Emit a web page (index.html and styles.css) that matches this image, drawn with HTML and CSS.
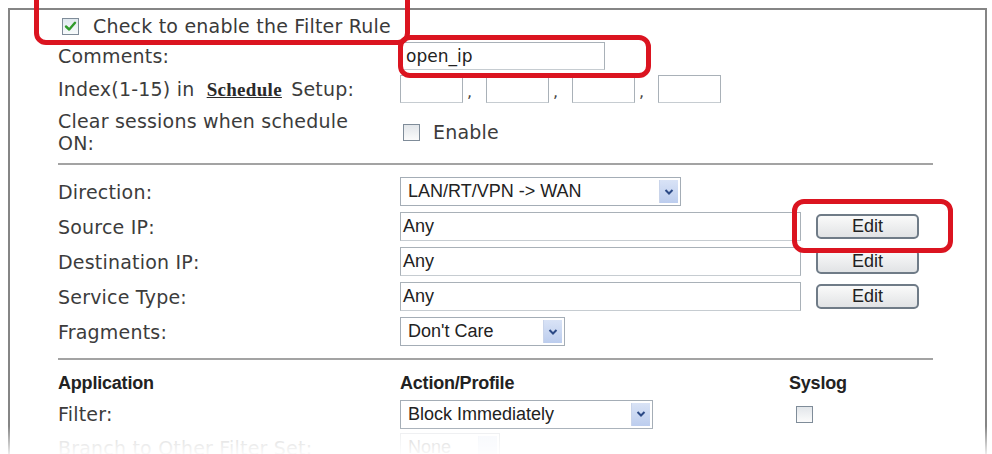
FILE: index.html
```html
<!DOCTYPE html>
<html>
<head>
<meta charset="utf-8">
<link rel="stylesheet" href="styles.css">
</head>
<body>
<div class="page">
  <div class="panel">
    <div class="row row-check">
      <div class="check-line">
        <span class="cb checked"><svg viewBox="0 0 17 17" width="17" height="17"><path d="M4 8.5 L7.2 11.5 L13 4.8" fill="none" stroke="#2f9a2a" stroke-width="2.4" stroke-linecap="round" stroke-linejoin="round"/></svg></span>
        <span class="check-text">Check to enable the Filter Rule</span>
      </div>
    </div>
    <div class="row row-comments">
      <div class="label">Comments:</div>
      <div class="ctrl"><div class="input comment-input">open_ip</div></div>
    </div>
    <div class="row row-index">
      <div class="label">Index(1-15) in <a class="sched">Schedule</a> Setup:</div>
      <div class="ctrl idx">
        <div class="input small"></div><span class="comma">,</span>
        <div class="input small"></div><span class="comma">,</span>
        <div class="input small"></div><span class="comma">,</span>
        <div class="input small"></div>
      </div>
    </div>
    <div class="row row-clear">
      <div class="label two">Clear sessions when schedule<br>ON:</div>
      <div class="ctrl"><span class="cb"></span><span class="enable">Enable</span></div>
    </div>
    <div class="sep"></div>
    <div class="row ctl-row">
      <div class="label">Direction:</div>
      <div class="ctrl"><div class="select dir"><span class="val">LAN/RT/VPN -&gt; WAN</span><span class="arrow"><svg viewBox="0 0 10 8" width="10" height="8"><path d="M1.5 2 L5 5.5 L8.5 2" fill="none" stroke="#2c4a86" stroke-width="2"/></svg></span></div></div>
    </div>
    <div class="row ctl-row">
      <div class="label">Source IP:</div>
      <div class="ctrl"><div class="input ip">Any</div><button class="btn">Edit</button></div>
    </div>
    <div class="row ctl-row">
      <div class="label">Destination IP:</div>
      <div class="ctrl"><div class="input ip">Any</div><button class="btn">Edit</button></div>
    </div>
    <div class="row ctl-row">
      <div class="label">Service Type:</div>
      <div class="ctrl"><div class="input ip">Any</div><button class="btn">Edit</button></div>
    </div>
    <div class="row ctl-row">
      <div class="label">Fragments:</div>
      <div class="ctrl"><div class="select frag"><span class="val">Don't Care</span><span class="arrow"><svg viewBox="0 0 10 8" width="10" height="8"><path d="M1.5 2 L5 5.5 L8.5 2" fill="none" stroke="#2c4a86" stroke-width="2"/></svg></span></div></div>
    </div>
    <div class="sep sep2"></div>
    <div class="row head-row">
      <div class="head">Application</div>
      <div class="ctrl heads"><span class="head">Action/Profile</span><span class="head syslog">Syslog</span></div>
    </div>
    <div class="row ctl-row filter-row">
      <div class="label">Filter:</div>
      <div class="ctrl"><div class="select action"><span class="val">Block Immediately</span><span class="arrow"><svg viewBox="0 0 10 8" width="10" height="8"><path d="M1.5 2 L5 5.5 L8.5 2" fill="none" stroke="#2c4a86" stroke-width="2"/></svg></span></div><span class="cb syslog-cb"></span></div>
    </div>
    <div class="row ctl-row faded">
      <div class="label">Branch to Other Filter Set:</div>
      <div class="ctrl"><div class="select none"><span class="val">None</span><span class="arrow"></span></div></div>
    </div>
  </div>
  <div class="hl hl1"></div>
  <div class="hl hl2"></div>
  <div class="hl hl3"></div>
  <div class="fade"></div>
</div>
</body>
</html>
```
FILE: styles.css
```css
html, body {
  margin: 0;
  padding: 0;
  background: #fff;
  overflow: hidden;
}
.page {
  position: relative;
  width: 992px;
  height: 454px;
  overflow: hidden;
}
.panel {
  margin: 8px 5px 0 8px;
  border: 2px solid #858585;
  border-bottom: none;
  height: 460px;
  padding: 0 0 0 48px;
  font-family: "DejaVu Sans", Verdana, sans-serif;
  font-size: 19px;
  letter-spacing: 0.2px;
  color: #3c3c3c;
}
.row {
  display: grid;
  grid-template-columns: 342px 1fr;
  align-items: center;
}
.ctrl {
  display: flex;
  align-items: center;
}
.row-check {
  display: flex;
  height: 32px;
}
.check-line {
  display: flex;
  align-items: center;
  margin-left: 4px;
}
.check-text {
  margin-left: 14px;
  font-size: 19px;
  color: #3a3a3a;
}
.row-comments { height: 28px; }
.row-index { height: 38px; }
.row-clear { height: 48px; align-items: center; }
.label.two { line-height: 22px; }
.cb {
  display: inline-block;
  width: 15px;
  height: 15px;
  border: 1px solid #7f8c99;
  background: linear-gradient(#e2e6ea, #fbfbfb);
  box-sizing: content-box;
  flex: none;
}
.cb svg { display: block; margin: -1px; }
.cb.checked { background: linear-gradient(#dfe8ee, #f8fbfc); }
.row-clear .cb { margin-left: 3px; }
.enable { margin-left: 13px; color: #3c3c3c; }
.input {
  box-sizing: border-box;
  height: 28px;
  border: 1px solid #a9b1b8;
  border-bottom-color: #c6ccd1;
  background: #fff;
  display: flex;
  align-items: center;
  padding-left: 4px;
  color: #222;
}
.comment-input {
  width: 205px;
  font-size: 17px;
  padding-left: 5px;
  letter-spacing: 0;
}
.input.small { width: 63px; }
.comma {
  width: 23px;
  text-align: left;
  padding-left: 4px;
  box-sizing: border-box;
  font-size: 16px;
  color: #444;
  align-self: flex-end;
  margin-bottom: 2px;
}
.sched {
  font-family: "Liberation Serif", "Times New Roman", serif;
  font-weight: bold;
  font-size: 19px;
  text-decoration: underline;
  color: #2a2a2a;
  margin: 0 3px 0 6px;
  letter-spacing: 0.3px;
}
.sep {
  height: 0;
  border-top: 2px solid #a3a3a3;
  margin: 7px 0 9px 0;
  width: 875px;
}
.sep2 { margin: 9px 0 8px 0; }
.ctl-row { height: 35px; }
.select, .input.ip {
  font-family: "Liberation Sans", Arial, sans-serif;
  font-size: 18px;
  letter-spacing: 0;
}
.select {
  box-sizing: border-box;
  height: 29px;
  border: 1px solid #a4adb6;
  display: flex;
  align-items: center;
  justify-content: space-between;
  padding: 0 2px 0 7px;
  color: #222;
  background: #fff;
}
.select .arrow {
  width: 18px;
  height: 23px;
  background: linear-gradient(#d9e3f6, #bccdee);
  border-left: 1px solid #c9d4ea;
  display: flex;
  align-items: center;
  justify-content: center;
}
.select.dir { width: 281px; }
.select.frag { width: 165px; }
.select.action { width: 253px; }
.select.none { width: 100px; }
.input.ip {
  width: 401px;
  height: 29px;
  padding-left: 2px;
}
.btn {
  margin-left: 15px;
  width: 103px;
  height: 25px;
  border: 2px solid #6f7b87;
  border-radius: 5px;
  background: linear-gradient(#fafafa, #e1e3e5);
  font-family: "Liberation Sans", Arial, sans-serif;
  font-size: 18px;
  color: #222;
  padding: 0;
}
.head-row { height: 30px; }
.head {
  font-family: "Liberation Sans", Arial, sans-serif;
  font-weight: bold;
  font-size: 18px;
  color: #222;
  letter-spacing: -0.2px;
}
.heads .syslog { margin-left: 268px; }
.heads .head:first-child { width: 121px; }
.filter-row { height: 32px; }
.syslog-cb { margin-left: 143px; }
.faded { opacity: 0.22; }
.hl {
  position: absolute;
  border: 5px solid #db1420;
  border-radius: 12px;
  box-sizing: border-box;
}
.hl1 { left: 34px; top: -14px; width: 376px; height: 59px; }
.hl2 { left: 398px; top: 35px; width: 253px; height: 43px; }
.hl3 { left: 792px; top: 199px; width: 161px; height: 54px; }
.fade {
  position: absolute;
  left: 0;
  right: 0;
  bottom: 0;
  height: 28px;
  background: linear-gradient(rgba(255,255,255,0), rgba(255,255,255,0.85));
}
```
